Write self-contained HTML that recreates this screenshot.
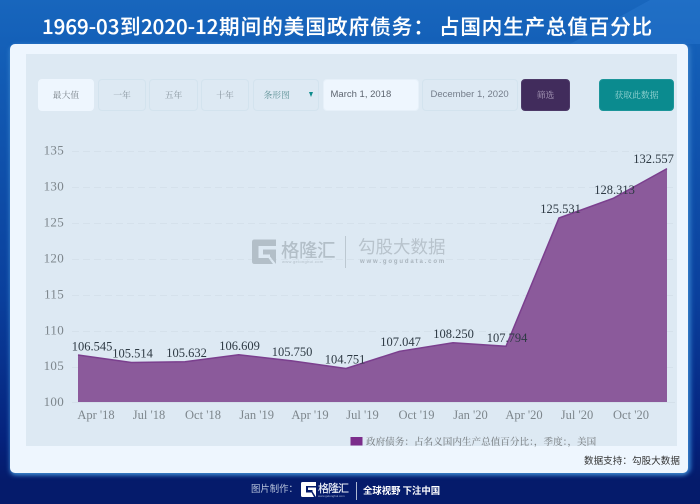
<!DOCTYPE html>
<html><head><meta charset="utf-8"><style>
*{margin:0;padding:0;box-sizing:border-box}
html,body{width:700px;height:504px;overflow:hidden;background:#051b6b}
body{position:relative;font-family:"Liberation Sans","Noto Sans CJK SC",sans-serif}
.a{position:absolute;white-space:nowrap}
.t{position:absolute;top:10px;white-space:nowrap;font:500 20.5px/30px 'Noto Sans CJK SC',sans-serif;color:#fff;text-shadow:0 0 .5px #fff}
.btn{position:absolute;top:79px;height:31.500px;border-radius:4px;border:1px solid #d3e3ee;background:#dde9f3;color:#84919a;font:8.8px/29px "Noto Serif CJK SC",serif;text-align:center}
.d{font:9.500px/29px 'Liberation Sans',sans-serif;text-align:left}
svg text{font-family:"Liberation Serif","DejaVu Serif",serif}
</style></head><body>
<div class="a" style="left:0;top:0;width:700px;height:504px;background:linear-gradient(180deg,#1866bd 0,#1460b8 42px,#0a3f9c 300px,#05227c 440px,#051b6b 480px)"></div>
<svg class="a" style="left:0;top:0" width="700" height="60"><polygon points="570,44 650,0 700,0 700,44" fill="#2a7bd0" opacity=".45"/></svg>
<div class="t" style="left:42px;letter-spacing:0">1969-03</div>
<div class="t" style="left:120px">到</div>
<div class="t" style="left:141px;letter-spacing:0">2020-12</div>
<div class="t" style="left:219px;letter-spacing:1.1px">期间的美国政府债务：</div>
<div class="t" style="left:439px;letter-spacing:.9px">占国内生产总值百分比</div>
<div class="a" style="left:10px;top:44px;width:678px;height:429px;background:#eef6fe;border-radius:5px;box-shadow:0 2px 5px #3f8bd0,3px 0 5px #2a6fc0"></div>
<div class="a" style="left:26px;top:54px;width:651px;height:392px;background:#dde9f3"></div>

<div class="btn" style="left:38px;width:56px;background:#eef6fe;border-color:#eef6fe;color:#7c858c">最大值</div>
<div class="btn" style="left:98px;width:48px">一年</div>
<div class="btn" style="left:149px;width:49px">五年</div>
<div class="btn" style="left:201px;width:48px">十年</div>
<div class="btn" style="left:252.500px;width:66px;text-align:left;padding-left:10px;color:#5f9297">条形图</div>
<div class="a" style="left:309px;top:92px;width:0;height:0;border-left:2.500px solid transparent;border-right:2.500px solid transparent;border-top:5px solid #0d8c8c"></div>
<div class="btn d" style="left:322.500px;width:96px;background:#eef6fe;border-color:#e6f0f9;color:#5d6570;padding-left:7px">March 1, 2018</div>
<div class="btn d" style="left:421.500px;width:96px;color:#747d8a;padding-left:8px">December 1, 2020</div>
<div class="btn" style="left:521px;width:49px;background:#412c5c;border-color:#4d3a68;color:#b0a3bf">筛选</div>
<div class="btn" style="left:599px;width:75px;background:#0b8b8f;border-color:#1b9599;color:#9ad6d5">获取此数据</div>

<svg class="a" style="left:0;top:0" width="700" height="504">
<g stroke="#d5e1eb" stroke-width="1" stroke-dasharray="7 4" fill="none">
<path d="M72 151.500H675M72 187.500H675M72 223.500H675M72 259.500H675M72 295.500H675M72 331.500H675M72 367.500H675"/>
</g>
<path d="M72 402.500H675" stroke="#d4e0ea" stroke-width="1"/>
<polygon points="78,355 131.500,362.500 185,361.700 238.700,354.700 292,360.900 346,368.500 399.500,351.300 453,342.800 506,346.300 559,218 613.500,198.200 667,168.600 667,402 78,402" fill="#8b5a9b" stroke="none"/>
<polyline points="78,355 131.500,362.500 185,361.700 238.700,354.700 292,360.900 346,368.500 399.500,351.300 453,342.800 506,346.300 559,218 613.500,198.200 667,168.600" fill="none" stroke="#7b3f8e" stroke-width="1.500"/>
<g font-size="13" fill="#7d868c" text-anchor="end" style="letter-spacing:.3px">
<text x="64" y="154.500">135</text><text x="64" y="190.500">130</text><text x="64" y="226.500">125</text><text x="64" y="262.500">120</text><text x="64" y="298.500">115</text><text x="64" y="334.500">110</text><text x="64" y="370">105</text><text x="64" y="406">100</text>
</g>
<g font-size="12.500" fill="#7d868c" text-anchor="middle">
<text x="96" y="419">Apr '18</text><text x="149" y="419">Jul '18</text><text x="203" y="419">Oct '18</text><text x="256.700" y="419">Jan '19</text><text x="310" y="419">Apr '19</text><text x="362.500" y="419">Jul '19</text><text x="416.500" y="419">Oct '19</text><text x="470.500" y="419">Jan '20</text><text x="524" y="419">Apr '20</text><text x="577" y="419">Jul '20</text><text x="631" y="419">Oct '20</text>
</g>
<g font-size="12.500" fill="#2e3a44" text-anchor="middle">
<text x="92" y="350.500">106.545</text><text x="132.500" y="357.700">105.514</text><text x="186.500" y="357.200">105.632</text><text x="239.500" y="350.200">106.609</text><text x="292" y="356.200">105.750</text><text x="345" y="363.700">104.751</text><text x="400.500" y="346.200">107.047</text><text x="453.500" y="338.200">108.250</text><text x="507" y="342.200">107.794</text><text x="560.500" y="213.200">125.531</text><text x="614.500" y="194.200">128.313</text><text x="653.500" y="163.200">132.557</text>
</g>
<!-- watermark -->
<path fill="#b3bfc8" d="M254.500 239.500H276V246H258.500V258H268.500L273 264H254.500Q252 264 252 261.500V242Q252 239.500 254.500 239.500Z"/>
<path fill="#b3bfc8" d="M263 249.500H276V264L270 256.500V254.500H263Z"/>
<path d="M345.500 236V268" stroke="#bcc8d1" stroke-width="1"/>
<rect x="350.500" y="437" width="12" height="8.500" fill="#7b2d8b"/>
</svg>
<div class="a" style="left:281px;top:238px;font:500 18.500px/24px 'Noto Sans CJK SC',sans-serif;color:#b3bfc8;letter-spacing:-.5px">格隆汇</div>
<div class="a" style="left:282px;top:259px;font:4px/6px 'Liberation Sans',sans-serif;color:#b3bfc8;letter-spacing:.35px">www.gelonghui.com</div>
<div class="a" style="left:358px;top:235px;font:400 17.500px/24px 'Noto Sans CJK SC',sans-serif;color:#b8c3cc">勾股大数据</div>
<div class="a" style="left:360px;top:258px;font:bold 6px/8px 'Liberation Sans',sans-serif;color:#a9b4bd;letter-spacing:1.850px">www.gogudata.com</div>

<div class="a" style="left:366px;top:434px;font:500 9.600px/15px 'Noto Serif CJK SC',serif;color:#7e8488">政府债务：占名义国内生产总值百分比：，季度：，美国</div>
<div class="a" style="left:584px;top:453px;font:9.600px/15px 'Noto Sans CJK SC',sans-serif;color:#333">数据支持：勾股大数据</div>

<div class="a" style="left:251px;top:481px;font:9.400px/15px 'Noto Sans CJK SC',sans-serif;color:#b9c4dd">图片制作：</div>
<svg class="a" style="left:300px;top:481px" width="18" height="17">
<path fill="#fff" d="M2.500 1H16V5H6V11.500H11.500L14 16H2.500Q1 16 1 14.500V2.500Q1 1 2.500 1Z"/>
<path fill="#fff" d="M8 6.500H16V16L12.500 10.500V9H8Z"/>
</svg>
<div class="a" style="left:318px;top:481px;font:500 11px/15px 'Noto Sans CJK SC',sans-serif;color:#e6ebf5;letter-spacing:-1px">格隆汇</div>
<div class="a" style="left:318px;top:494px;font:3px/4px 'Liberation Sans',sans-serif;color:#aeb8d2">www.gelonghui.com</div>
<div class="a" style="left:356px;top:482px;width:1px;height:18px;background:#aeb8d2"></div>
<div class="a" style="left:363px;top:483px;font:700 9.400px/15px 'Noto Sans CJK SC',sans-serif;color:#fff">全球视野 下注中国</div>
</body></html>
